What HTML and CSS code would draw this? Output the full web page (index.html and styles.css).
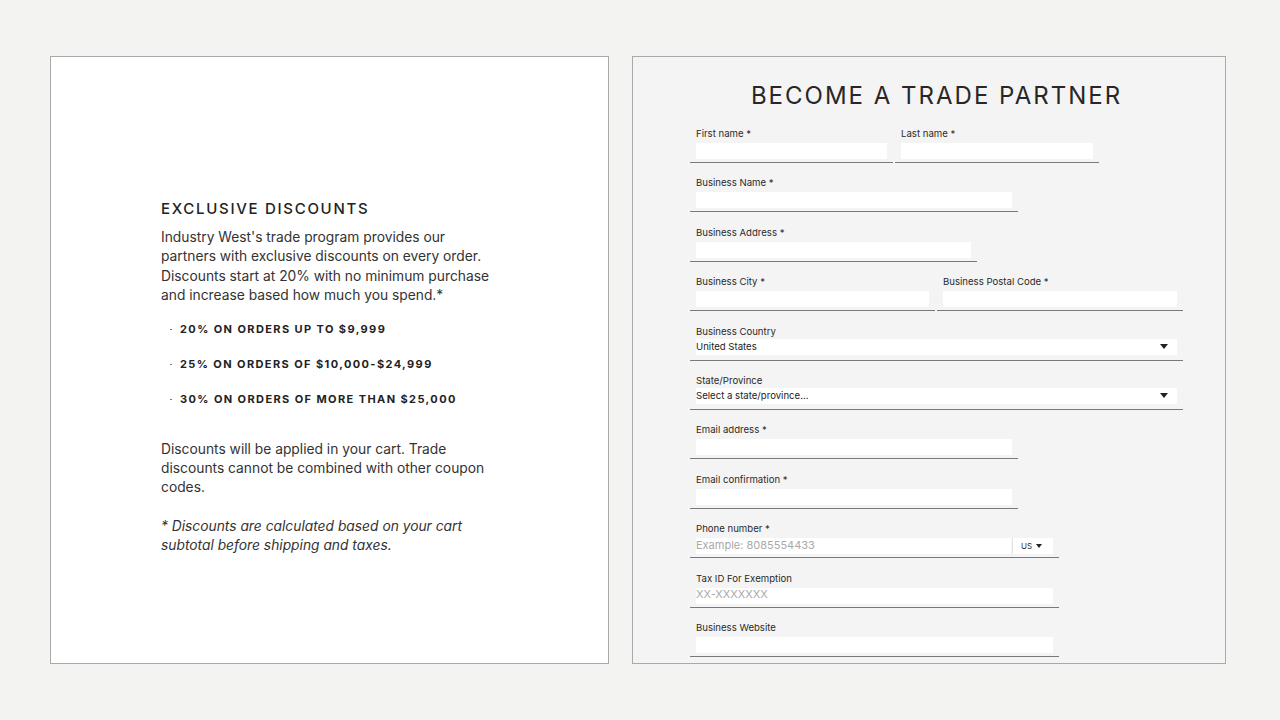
FILE: index.html
```html
<!DOCTYPE html>
<html lang="en">
<head>
<meta charset="utf-8">
<title>Trade Program</title>
<link rel="stylesheet" href="styles.css">
</head>
<body>
<main class="page">
  <section class="card info">
    <div class="info-body">
      <h2 class="info-title">EXCLUSIVE DISCOUNTS</h2>
      <p class="info-text">Industry West's trade program provides our partners with exclusive discounts on every order. Discounts start at 20% with no minimum purchase and increase based how much you spend.*</p>
      <ul class="tiers">
        <li>20% ON ORDERS UP TO $9,999</li>
        <li>25% ON ORDERS OF $10,000-$24,999</li>
        <li>30% ON ORDERS OF MORE THAN $25,000</li>
      </ul>
      <p class="info-text">Discounts will be applied in your cart. Trade discounts cannot be combined with other coupon codes.</p>
      <p class="info-text note">* Discounts are calculated based on your cart subtotal before shipping and taxes.</p>
    </div>
  </section>

  <section class="card form-card">
    <div class="form">
      <h1 class="form-title">BECOME A TRADE PARTNER</h1>

      <div class="row">
        <div class="field w203"><label class="lbl">First name *</label><input class="inp" type="text"></div>
        <div class="field w204"><label class="lbl">Last name *</label><input class="inp" type="text"></div>
      </div>

      <div class="field w328"><label class="lbl">Business Name *</label><input class="inp" type="text"></div>
      <div class="field w287"><label class="lbl">Business Address *</label><input class="inp" type="text"></div>

      <div class="row">
        <div class="field w245"><label class="lbl">Business City *</label><input class="inp" type="text"></div>
        <div class="field w246"><label class="lbl">Business Postal Code *</label><input class="inp" type="text"></div>
      </div>

      <div class="field full sel-field"><label class="lbl">Business Country</label>
        <div class="select"><span>United States</span><i class="caret"></i></div>
      </div>
      <div class="field full sel-field"><label class="lbl">State/Province</label>
        <div class="select"><span>Select a state/province...</span><i class="caret"></i></div>
      </div>

      <div class="field w328"><label class="lbl">Email address *</label><input class="inp" type="text"></div>
      <div class="field w328"><label class="lbl">Email confirmation *</label><input class="inp" type="text"></div>

      <div class="field w369"><label class="lbl">Phone number *</label>
        <div class="phone"><input class="inp ph" type="text" placeholder="Example: 8085554433"><div class="cc"><span>US</span><i class="caret"></i></div></div>
      </div>
      <div class="field w369"><label class="lbl">Tax ID For Exemption</label><input class="inp ph" type="text" placeholder="XX-XXXXXXX"></div>
      <div class="field w369"><label class="lbl">Business Website</label><input class="inp" type="text"></div>
    </div>
  </section>
</main>
</body>
</html>
```
FILE: styles.css
```css
* { box-sizing: border-box; }
html, body { margin: 0; padding: 0; }
body {
  background: #f3f3f1;
  font-family: Inter, "Open Sans", sans-serif;
  color: #222;
  width: 1280px;
  height: 720px;
  overflow: hidden;
}
.page {
  display: flex;
  gap: 23px;
  padding: 56px 0 0 50px;
}
.card {
  border: 1px solid #a9a9a9;
  height: 608px;
  overflow: hidden;
}
.info {
  width: 559px;
  background: #fff;
}
.info-body {
  padding: 143px 0 0 110px;
  width: 450px;
}
.info-title {
  margin: 0 0 10px;
  font-size: 15px;
  font-weight: 500;
  letter-spacing: 1.7px;
  line-height: 18px;
  color: #222;
}
.info-text {
  margin: 0;
  font-size: 13.8px;
  line-height: 19.4px;
  color: #333;
  width: 335px;
}
.info-text + .info-text { margin-top: 19px; }
.note { font-style: italic; }
.tiers {
  list-style: none;
  margin: 16px 0 33px;
  padding: 0;
}
.tiers li {
  position: relative;
  padding-left: 19px;
  font-size: 11px;
  font-weight: 700;
  letter-spacing: 1.4px;
  line-height: 15px;
  margin-bottom: 20px;
  color: #222;
}
.tiers li:last-child { margin-bottom: 0; }
.tiers li::before {
  content: "";
  position: absolute;
  left: 9px;
  top: 7px;
  width: 2px;
  height: 1px;
  background: #777;
}
.form-card {
  width: 594px;
  background: #f4f4f4;
}
.form {
  width: 493px;
  margin-left: 57px;
  padding-top: 23px;
}
.form-title {
  margin: 0 0 16px;
  text-align: center;
  font-size: 24px;
  font-weight: 400;
  letter-spacing: 2px;
  line-height: 32px;
  color: #2a2626;
}
.row { display: flex; gap: 2px; }
.field {
  border-bottom: 1px solid #7a7a7a;
  padding: 0 6px 3px;
  margin-bottom: 14.4px;
}
.lbl {
  display: block;
  font-size: 9.6px;
  line-height: 12px;
  color: #2a2a2a;
}
.inp {
  display: block;
  width: 100%;
  height: 16px;
  margin-top: 3px;
  border: 0;
  padding: 0;
  background: #fff;
  font-family: inherit;
  font-size: 11px;
  line-height: 12px;
  outline: none;
}
.inp.ph { padding-bottom: 3px; }
.inp.ph::placeholder { color: #a9a9a9; }
.w203 { width: 203px; }
.w204 { width: 204px; }
.w328 { width: 328px; }
.w287 { width: 287px; }
.w245 { width: 245px; }
.w246 { width: 246px; }
.w369 { width: 369px; }
.full { width: 493px; }
.sel-field { padding-bottom: 5px; }
.select {
  display: flex;
  align-items: center;
  justify-content: space-between;
  height: 16px;
  margin-top: 1px;
  background: #fff;
  font-size: 9.6px;
  color: #222;
  padding-right: 9px;
}
.caret {
  width: 0;
  height: 0;
  border-left: 4px solid transparent;
  border-right: 4px solid transparent;
  border-top: 5px solid #222;
}
.phone {
  display: flex;
  margin-top: 3px;
}
.phone .inp { margin-top: 0; flex: 1; }
.cc {
  width: 41px;
  height: 16px;
  margin-left: 1px;
  border-left: 1px solid #e4e4e4;
  background: #fff;
  display: flex;
  align-items: center;
  gap: 4px;
  padding-left: 8px;
  font-size: 8px;
  color: #333;
}
.cc .caret {
  border-left-width: 3.5px;
  border-right-width: 3.5px;
  border-top-width: 4px;
}
```
